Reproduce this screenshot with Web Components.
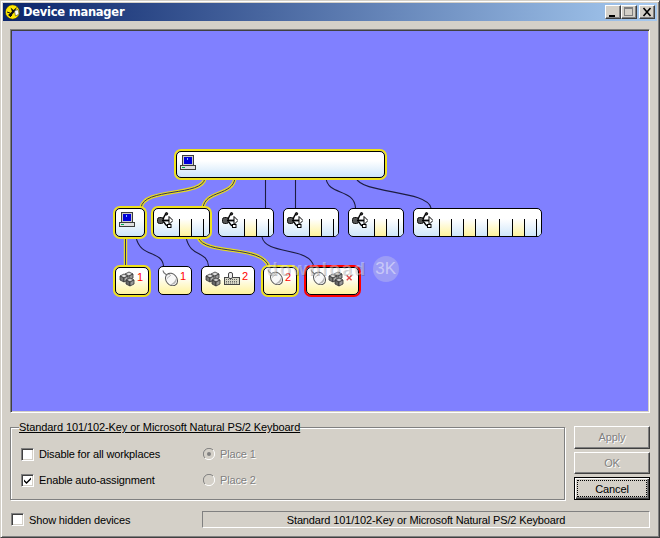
<!DOCTYPE html>
<html>
<head>
<meta charset="utf-8">
<title>Device manager</title>
<style>
  html, body { margin: 0; padding: 0; background: #d4d0c8; }
</style>
</head>
<body>
<win-window>
  <win-titlebar>Device manager</win-titlebar>

  <device-canvas>
    <dev-node x="176" y="151" w="209" h="27" tone="blue" ring="yellow" icon="computer"></dev-node>

    <dev-node x="115" y="208" w="30" h="29" tone="blue" ring="yellow" icon="computer"></dev-node>
    <dev-node x="153" y="208" w="57" h="29" tone="blue" ring="yellow" icon="usb" ports="26:yb-"></dev-node>
    <dev-node x="218" y="208" w="56" h="29" tone="blue" icon="usb" ports="26:yb-"></dev-node>
    <dev-node x="283" y="208" w="56" h="29" tone="blue" icon="usb" ports="26:yb-"></dev-node>
    <dev-node x="348" y="208" w="56" h="29" tone="blue" icon="usb" ports="26:yb-"></dev-node>
    <dev-node x="413" y="208" w="129" h="29" tone="blue" icon="usb" ports="26:ybybybyb-"></dev-node>

    <dev-node x="115" y="267" w="34" h="28" tone="yellow" ring="yellow" icon="cubes" badge="1"></dev-node>
    <dev-node x="158" y="266" w="34" h="29" tone="yellow" icon="mouse" badge="1"></dev-node>
    <dev-node x="201" y="266" w="54" h="29" tone="yellow" icon="cubes keyboard" badge="2"></dev-node>
    <dev-node x="263" y="267" w="34" h="28" tone="yellow" ring="yellow" icon="mouse" badge="2"></dev-node>
    <dev-node x="306" y="267" w="53" h="28" tone="yellow" ring="red" icon="mouse cubes cross"></dev-node>

    <water-mark></water-mark>
  </device-canvas>

  <win-footer>
    <win-group slot="group" label="Standard 101/102-Key or Microsoft Natural PS/2 Keyboard">
      <win-check>Disable for all workplaces</win-check>
      <win-radio checked>Place 1</win-radio>
      <win-check checked>Enable auto-assignment</win-check>
      <win-radio>Place 2</win-radio>
    </win-group>
    <win-button slot="actions" disabled>Apply</win-button>
    <win-button slot="actions" disabled>OK</win-button>
    <win-button slot="actions" focused>Cancel</win-button>
    <win-check slot="hidden">Show hidden devices</win-check>
    <win-status slot="status">Standard 101/102-Key or Microsoft Natural PS/2 Keyboard</win-status>
  </win-footer>
</win-window>

<script>
const UI_FONT = '"Liberation Sans", Arial, sans-serif';

// small pixel-ish icons, all on a 16x16 grid
const ICONS = {
  computer: `
    <rect x="2.5" y="0.5" width="11" height="10" fill="#c8c8c8" stroke="#3c3c3c"/>
    <rect x="4" y="2" width="8" height="7" fill="#0000d8"/>
    <rect x="7" y="3" width="1" height="2" fill="#80c0ff"/>
    <rect x="0.5" y="10.5" width="15" height="4" fill="#e0e0e0" stroke="#3c3c3c"/>
    <rect x="2" y="12" width="3" height="1" fill="#00b050"/>`,
  usb: `
    <rect x="0.5" y="5.5" width="6" height="6" rx="2" fill="#555" stroke="#111"/>
    <path d="M5 8.5H13" stroke="#000" stroke-width="1.8" fill="none"/>
    <path d="M12 4.5L16 8.5L12 12.5Z" fill="#fff" stroke="#000"/>
    <path d="M6 7C7.5 5 7 2.5 9.5 2M6.5 10C8.5 11 8 13.5 11 14" stroke="#000" stroke-width="1.4" fill="none"/>
    <circle cx="9.5" cy="1.8" r="1.2" fill="#333" stroke="#000"/>
    <rect x="10.5" y="12.5" width="3.5" height="3" fill="#fff" stroke="#000"/>`,
  mouse: `
    <path d="M1 0.5C1 3 2.5 3.5 5 5" stroke="#777" stroke-width="1.2" fill="none"/>
    <ellipse cx="9.5" cy="9.5" rx="5.4" ry="6.8" transform="rotate(-40 9.5 9.5)" fill="#f8f8f8" stroke="#555"/>
    <path d="M8 14.8C12 15.6 15.8 12 14.2 7.5C13.5 11 11 13.5 8 14.8Z" fill="#b4b4b4"/>
    <path d="M4 6C6 3.5 8.5 4.5 8.5 5.5C7 6.5 6 7.5 5 8.5" stroke="#999" stroke-width=".8" fill="none"/>`,
  cubes: `
    <path d="M1 5L5 3L9 5L5 7Z" fill="#ddd" stroke="#333" stroke-width=".8"/>
    <path d="M1 5V9L5 11V7Z" fill="#777" stroke="#333" stroke-width=".8"/>
    <path d="M9 5V9L5 11V7Z" fill="#aaa" stroke="#333" stroke-width=".8"/>
    <path d="M6 3L10 1L14 3L10 5Z" fill="#ddd" stroke="#333" stroke-width=".8"/>
    <path d="M14 3V7L10 9V5Z" fill="#999" stroke="#333" stroke-width=".8"/>
    <path d="M7 9L11 7L15 9L11 11Z" fill="#ccc" stroke="#333" stroke-width=".8"/>
    <path d="M7 9V13L11 15V11Z" fill="#666" stroke="#333" stroke-width=".8"/>
    <path d="M15 9V13L11 15V11Z" fill="#999" stroke="#333" stroke-width=".8"/>`,
  keyboard: `
    <rect x="0.5" y="6.5" width="15" height="7" fill="#d8d8c8" stroke="#444"/>
    <path d="M2 8.5H14M2 10.5H14M2 12H14" stroke="#666" stroke-dasharray="1 1"/>
    <rect x="4.5" y="1.5" width="4" height="6" rx="1.5" fill="#eee" stroke="#444"/>`,
  cross: `
    <path d="M4 5L11 12M11 5L4 12" stroke="#e04848" stroke-width="2"/>`,
};

class WinWindow extends HTMLElement {
  constructor() {
    super();
    this.attachShadow({ mode: 'open' }).innerHTML = `
      <style>
        :host {
          display: flex;
          flex-direction: column;
          box-sizing: border-box;
          width: 660px;
          height: 538px;
          padding: 1px;
          background: #d4d0c8;
          border: 1px solid;
          border-color: #d4d0c8 #404040 #404040 #d4d0c8;
          box-shadow: inset 1px 1px 0 #fff, inset -1px -1px 0 #808080;
          font: 11px ${UI_FONT};
          letter-spacing: -0.14px;
          color: #000;
        }
        .inner { display: flex; flex-direction: column; flex: 1; padding: 1px; }
      </style>
      <div class="inner"><slot></slot></div>
    `;
  }
}

class WinTitlebar extends HTMLElement {
  constructor() {
    super();
    this.attachShadow({ mode: 'open' }).innerHTML = `
      <style>
        :host {
          display: flex;
          align-items: center;
          flex: 0 0 18px;
          height: 18px;
          padding: 0 2px;
          background: linear-gradient(90deg, #0a246a, #a6caf0);
          color: #fff;
          font: bold 11.5px "DejaVu Sans", ${UI_FONT};
        }
        .logo { width: 16px; height: 16px; margin-right: 2px; }
        .text { flex: 1; letter-spacing: -0.25px; }
        .btn {
          box-sizing: border-box;
          width: 16px;
          height: 14px;
          background: #d4d0c8;
          border: 1px solid;
          border-color: #fff #404040 #404040 #fff;
          box-shadow: inset -1px -1px 0 #808080;
        }
        .btn svg { display: block; width: 14px; height: 12px; }
        .close { margin-left: 2px; }
      </style>
      <svg class="logo" viewBox="0 0 16 16">
        <circle cx="7.5" cy="8" r="7.2" fill="#ffe800" stroke="#222" stroke-width=".6"/>
        <path d="M3 11L7 7.5L5.5 3.5L8.5 6L12 3L9.5 8L8 9.5L5.5 13Z" fill="#111"/>
        <path d="M9.5 7L13 5.5L14 10L10.5 12Z" fill="#fff" stroke="#222" stroke-width=".5"/>
        <path d="M2 8L5 9M5 13L7 11" stroke="#111"/>
      </svg>
      <span class="text"><slot></slot></span>
      <div class="btn"><svg viewBox="0 0 14 12"><rect x="3" y="9" width="6" height="2" fill="#000"/></svg></div>
      <div class="btn"><svg viewBox="0 0 14 12"><rect x="2.5" y="2.5" width="8" height="7" fill="none" stroke="#808080"/><rect x="2" y="1" width="9" height="2" fill="#808080"/></svg></div>
      <div class="btn close"><svg viewBox="0 0 14 12"><path d="M3.5 2L10.5 10M10.5 2L3.5 10" stroke="#000" stroke-width="1.6"/></svg></div>
    `;
  }
}

class DeviceCanvas extends HTMLElement {
  constructor() {
    super();
    // wires are in window coordinates, the svg is shifted back by the canvas origin
    const thin = [
      'M265.5 178V208', 'M295.5 178V208',
      'M326 178C328 196 354 188 355.5 208',
      'M356 178C362 194 428 190 431 208',
      'M136 237C140 258 162 250 163.5 266',
      'M186 237C190 258 207 250 208.5 266',
      'M262 237C266 256 310 246 314 267',
    ];
    const bold = [
      'M205 178C203 197 143 187 141 208',
      'M235 178C233 196 205 190 203 208',
      'M125.5 237V267',
      'M198 237C204 256 262 244 269 267',
    ];
    const wires = bold.map((d) => `<path d="${d}" stroke="#e8dc20" stroke-width="3.4" fill="none"/><path d="${d}" stroke="#303060" stroke-width="1" fill="none"/>`).join('')
      + thin.map((d) => `<path d="${d}" stroke="#1c1c40" stroke-width="1.1" fill="none"/>`).join('');
    this.attachShadow({ mode: 'open' }).innerHTML = `
      <style>
        :host {
          display: block;
          position: relative;
          box-sizing: border-box;
          flex: 0 0 384px;
          height: 384px;
          margin: 8px 7px 0 7px;
          background: #8080ff;
          border: 1px solid;
          border-color: #808080 #fff #fff #808080;
          box-shadow: inset 1px 1px 0 #404040, inset -1px -1px 0 #d4d0c8;
          overflow: hidden;
        }
        svg { position: absolute; left: -11px; top: -30px; width: 660px; height: 538px; }
      </style>
      <svg viewBox="0 0 660 538">${wires}</svg>
      <slot></slot>
    `;
  }
}

class DevNode extends HTMLElement {
  constructor() {
    super();
    const a = (n) => this.getAttribute(n);
    const x = +a('x') - 11, y = +a('y') - 30;
    const tone = a('tone');
    const ring = { yellow: '#efe21c', red: '#ff0000' }[a('ring')];
    const end = tone === 'yellow' ? '#fff39c' : '#cfe6fa';

    const icons = (a('icon') || '').split(' ').map((name) => `<svg class="i i-${name}" viewBox="0 0 16 16">${ICONS[name]}</svg>`).join('');

    let ports = '';
    if (a('ports')) {
      const [offset, cells] = a('ports').split(':');
      const cols = [...cells].map((c) => `<i class="p ${c}"></i>`).join('');
      ports = `<div class="ports" style="left:${offset - 1}px">${cols}</div>`;
    }
    const badge = a('badge') ? `<b class="badge">${a('badge')}</b>` : '';

    this.attachShadow({ mode: 'open' }).innerHTML = `
      <style>
        :host {
          position: absolute;
          left: ${x}px;
          top: ${y}px;
          width: ${a('w')}px;
          height: ${a('h')}px;
          box-sizing: border-box;
          display: flex;
          align-items: flex-start;
          gap: 2px;
          padding: 3px 0 0 3px;
          border: 1px solid #000;
          border-radius: 5px;
          background: linear-gradient(#fff 35%, ${end});
          ${ring ? `box-shadow: 0 0 0 2px ${ring};` : ''}
        }
        .i { width: 16px; height: 16px; flex: none; }
        .i-keyboard { margin-left: 1px; margin-top: 1px; }
        .i-cross { width: 11px; height: 11px; margin: 1px 0 0 -2px; }
        .i-cubes { margin-top: 1px; }
        :host([ring]) .i-mouse { margin-top: -2px; }
        :host([ring]) .i-cubes { margin-top: 0; }
        .badge { font: 11px ${UI_FONT}; color: #f00; line-height: 12px; }
        .ports {
          position: absolute;
          right: 0;
          top: 10px;
          bottom: 0;
          display: flex;
          border-radius: 0 0 4px 0;
          overflow: hidden;
        }
        .p { flex: 0 0 12.1px; border-left: 1px solid #000; box-sizing: border-box; background: linear-gradient(#fff, ${end}); }
        .p.y { background: linear-gradient(#fff, #fff39c); }
        .p.- { flex: 1 1 auto; }
      </style>
      ${icons}${badge}${ports}
      <slot></slot>
    `;
  }
}

// faint site stamp lying over the diagram
class WaterMark extends HTMLElement {
  constructor() {
    super();
    this.attachShadow({ mode: 'open' }).innerHTML = `
      <style>
        :host {
          position: absolute;
          left: 255px;
          top: 226px;
          display: flex;
          align-items: center;
          gap: 6px;
          pointer-events: none;
          letter-spacing: 0;
        }
        .t {
          font: bold 19px "Liberation Sans", sans-serif;
          color: rgba(255, 255, 255, .36);
          text-shadow: 1px 1px 0 rgba(70, 70, 70, .28);
          letter-spacing: 1.5px;
        }
        .c {
          box-sizing: border-box;
          width: 26px;
          height: 26px;
          border-radius: 50%;
          background: rgba(190, 190, 235, .45);
          color: #c8c8f8;
          font: 17px "Liberation Sans", sans-serif;
          text-align: center;
          line-height: 26px;
        }
      </style>
      <span class="t">download</span><span class="c">3K</span>
    `;
  }
}

class WinFooter extends HTMLElement {
  constructor() {
    super();
    this.attachShadow({ mode: 'open' }).innerHTML = `
      <style>
        :host {
          display: grid;
          grid-template-columns: 555px 76px;
          grid-template-rows: 79px 17px;
          column-gap: 9px;
          row-gap: 11px;
          margin: 8px 7px 0 7px;
        }
        .actions { display: flex; flex-direction: column; gap: 3px; padding-top: 5px; }
        .bottom {
          grid-column: 1 / 3;
          display: grid;
          grid-template-columns: 192px 1fr;
          align-items: center;
        }
        .hidden { padding-left: 1px; }
      </style>
      <div><slot name="group"></slot></div>
      <div class="actions"><slot name="actions"></slot></div>
      <div class="bottom">
        <div class="hidden"><slot name="hidden"></slot></div>
        <slot name="status"></slot>
      </div>
    `;
  }
}

class WinGroup extends HTMLElement {
  constructor() {
    super();
    this.attachShadow({ mode: 'open' }).innerHTML = `
      <style>
        :host { display: block; }
        fieldset {
          box-sizing: border-box;
          height: 79px;
          margin: 0;
          padding: 7px 0 0 10px;
          border: 1px solid #808080;
          box-shadow: 1px 1px 0 #fff, inset 1px 1px 0 #fff;
          display: block;
        }
        legend {
          padding: 0;
          margin-left: -2px;
          background: #d4d0c8;
          text-decoration: underline;
          line-height: 13px;
          letter-spacing: -0.09px;
        }
        .rows {
          display: grid;
          grid-template-columns: 182px 1fr;
          grid-auto-rows: 26px;
          align-items: center;
        }
      </style>
      <fieldset>
        <legend>${this.getAttribute('label')}</legend>
        <div class="rows"><slot></slot></div>
      </fieldset>
    `;
  }
}

class WinCheck extends HTMLElement {
  constructor() {
    super();
    const mark = this.hasAttribute('checked')
      ? '<svg viewBox="0 0 9 9"><path d="M1 3.5L3.5 6L8 1.5V3.5L3.5 8L1 5.5Z" fill="#000"/></svg>'
      : '';
    this.attachShadow({ mode: 'open' }).innerHTML = `
      <style>
        :host { display: flex; align-items: center; gap: 5px; }
        .box {
          box-sizing: border-box;
          width: 13px;
          height: 13px;
          flex: none;
          background: #fff;
          border: 1px solid;
          border-color: #808080 #fff #fff #808080;
          box-shadow: inset 1px 1px 0 #404040, inset -1px -1px 0 #d4d0c8;
          padding: 1px;
        }
        svg { display: block; width: 9px; height: 9px; }
      </style>
      <span class="box">${mark}</span><span><slot></slot></span>
    `;
  }
}

class WinRadio extends HTMLElement {
  constructor() {
    super();
    const dot = this.hasAttribute('checked') ? '<circle cx="6" cy="6" r="2" fill="#808080"/>' : '';
    this.attachShadow({ mode: 'open' }).innerHTML = `
      <style>
        :host { display: flex; align-items: center; gap: 5px; color: #808080; text-shadow: 1px 1px 0 #fff; }
        svg { width: 12px; height: 12px; flex: none; }
      </style>
      <svg viewBox="0 0 12 12">
        <path d="M10 2A5.5 5.5 0 0 0 2 10" fill="none" stroke="#808080"/>
        <path d="M2 10A5.5 5.5 0 0 0 10 2" fill="none" stroke="#fff"/>
        ${dot}
      </svg>
      <span><slot></slot></span>
    `;
  }
}

class WinButton extends HTMLElement {
  constructor() {
    super();
    this.attachShadow({ mode: 'open' }).innerHTML = `
      <style>
        :host {
          display: flex;
          align-items: center;
          justify-content: center;
          box-sizing: border-box;
          height: 23px;
          background: #d4d0c8;
          border: 1px solid;
          border-color: #fff #404040 #404040 #fff;
          box-shadow: inset -1px -1px 0 #808080;
        }
        :host([disabled]) { color: #808080; text-shadow: 1px 1px 0 #fff; }
        :host([focused]) {
          border-color: #000;
          box-shadow: inset 1px 1px 0 #fff, inset -1px -1px 0 #404040, inset -2px -2px 0 #808080;
        }
        :host([focused]) span {
          align-self: stretch;
          flex: 1;
          margin: 3px;
          outline: 1px dotted #000;
          display: flex;
          align-items: center;
          justify-content: center;
        }
      </style>
      <span><slot></slot></span>
    `;
  }
}

class WinStatus extends HTMLElement {
  constructor() {
    super();
    this.attachShadow({ mode: 'open' }).innerHTML = `
      <style>
        :host {
          display: flex;
          align-items: center;
          justify-content: center;
          box-sizing: border-box;
          height: 17px;
          border: 1px solid;
          border-color: #808080 #fff #fff #808080;
        }
      </style>
      <slot></slot>
    `;
  }
}

customElements.define('win-window', WinWindow);
customElements.define('win-titlebar', WinTitlebar);
customElements.define('device-canvas', DeviceCanvas);
customElements.define('dev-node', DevNode);
customElements.define('water-mark', WaterMark);
customElements.define('win-footer', WinFooter);
customElements.define('win-group', WinGroup);
customElements.define('win-check', WinCheck);
customElements.define('win-radio', WinRadio);
customElements.define('win-button', WinButton);
customElements.define('win-status', WinStatus);
</script>
</body>
</html>
